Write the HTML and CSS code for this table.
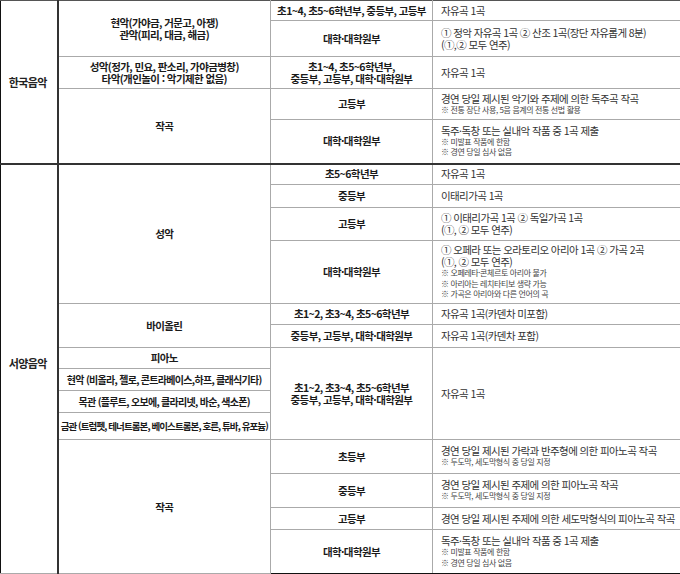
FILE: index.html
```html
<!DOCTYPE html>
<html lang="ko">
<head>
<meta charset="utf-8">
<link rel="stylesheet" href="styles.css">
</head>
<body>
<table class="grid">
  <colgroup>
    <col class="c1"><col class="c2"><col class="c3"><col class="c4">
  </colgroup>
  <tbody>
    <tr class="h20">
      <td class="cat" rowspan="5">한국음악</td>
      <td class="inst" rowspan="2">현악(가야금, 거문고, 아쟁)<br>관악(피리, 대금, 해금)</td>
      <td class="lvl">초1~4, 초5~6학년부, 중등부, 고등부</td>
      <td class="req">자유곡 1곡</td>
    </tr>
    <tr class="h36">
      <td class="lvl">대학·대학원부</td>
      <td class="req">① 정악 자유곡 1곡 ② 산조 1곡(장단 자유롭게 8분)<br>(①,② 모두 연주)</td>
    </tr>
    <tr class="h32">
      <td class="inst">성악(정가, 민요, 판소리, 가야금병창)<br>타악(개인놀이 : 악기제한 없음)</td>
      <td class="lvl">초1~4, 초5~6학년부,<br>중등부, 고등부, 대학·대학원부</td>
      <td class="req">자유곡 1곡</td>
    </tr>
    <tr class="h31">
      <td class="inst" rowspan="2">작곡</td>
      <td class="lvl">고등부</td>
      <td class="req">경연 당일 제시된 악기와 주제에 의한 독주곡 작곡<div class="note">※ 전통 장단 사용, 5음 음계의 전통 선법 활용</div></td>
    </tr>
    <tr class="h44">
      <td class="lvl">대학·대학원부</td>
      <td class="req">독주·독창 또는 실내악 작품 중 1곡 제출<div class="note">※ 미발표 작품에 한함</div><div class="note">※ 경연 당일 심사 없음</div></td>
    </tr>

    <tr class="h21 sect">
      <td class="cat west" rowspan="14">서양음악</td>
      <td class="inst" rowspan="4">성악</td>
      <td class="lvl">초5~6학년부</td>
      <td class="req">자유곡 1곡</td>
    </tr>
    <tr class="h23">
      <td class="lvl">중등부</td>
      <td class="req">이태리가곡 1곡</td>
    </tr>
    <tr class="h33">
      <td class="lvl">고등부</td>
      <td class="req">① 이태리가곡 1곡 ② 독일가곡 1곡<br>(①, ② 모두 연주)</td>
    </tr>
    <tr class="h63">
      <td class="lvl">대학·대학원부</td>
      <td class="req">① 오페라 또는 오라토리오 아리아 1곡 ② 가곡 2곡<br>(①, ② 모두 연주)<div class="note">※ 오페레타·콘체르토 아리아 불가</div><div class="note">※ 아리아는 레치타티보 생략 가능</div><div class="note">※ 가곡은 아리아와 다른 언어의 곡</div></td>
    </tr>
    <tr class="h21">
      <td class="inst" rowspan="2">바이올린</td>
      <td class="lvl">초1~2, 초3~4, 초5~6학년부</td>
      <td class="req">자유곡 1곡(카덴차 미포함)</td>
    </tr>
    <tr class="h23">
      <td class="lvl">중등부, 고등부, 대학·대학원부</td>
      <td class="req">자유곡 1곡(카덴차 포함)</td>
    </tr>
    <tr class="h21">
      <td class="inst">피아노</td>
      <td class="lvl" rowspan="4">초1~2, 초3~4, 초5~6학년부<br>중등부, 고등부, 대학·대학원부</td>
      <td class="req" rowspan="4">자유곡 1곡</td>
    </tr>
    <tr class="h22">
      <td class="inst sm">현악 (비올라, 첼로, 콘트라베이스,하프, 클래식기타)</td>
    </tr>
    <tr class="h22">
      <td class="inst sm">목관 (플루트, 오보에, 클라리넷, 바순, 색소폰)</td>
    </tr>
    <tr class="h27">
      <td class="inst xs">금관 (트럼펫, 테너트롬본, 베이스트롬본, 호른, 튜바, 유포늄)</td>
    </tr>
    <tr class="h34">
      <td class="inst" rowspan="4">작곡</td>
      <td class="lvl">초등부</td>
      <td class="req">경연 당일 제시된 가락과 반주형에 의한 피아노곡 작곡<div class="note">※ 두도막, 세도막형식 중 당일 지정</div></td>
    </tr>
    <tr class="h34">
      <td class="lvl">중등부</td>
      <td class="req">경연 당일 제시된 주제에 의한 피아노곡 작곡<div class="note">※ 두도막, 세도막형식 중 당일 지정</div></td>
    </tr>
    <tr class="h22">
      <td class="lvl">고등부</td>
      <td class="req">경연 당일 제시된 주제에 의한 세도막형식의 피아노곡 작곡</td>
    </tr>
    <tr class="h44">
      <td class="lvl">대학·대학원부</td>
      <td class="req">독주·독창 또는 실내악 작품 중 1곡 제출<div class="note">※ 미발표 작품에 한함</div><div class="note">※ 경연 당일 심사 없음</div></td>
    </tr>
  </tbody>
</table>
</body>
</html>
```

FILE: styles.css
```css
html, body {
  margin: 0;
  padding: 0;
  background: #fff;
}
body {
  font-family: "Noto Sans CJK KR", "Noto Sans", sans-serif;
  color: #222;
}
.grid {
  border-collapse: collapse;
  table-layout: fixed;
  width: 680px;
  height: 574px;
  border: 1px solid #222;
}
.c1 { width: 57px; }
.c2 { width: 213px; }
.c3 { width: 162px; }
.c4 { width: 248px; }

.grid td {
  border: 1px solid #aaa;
  padding: 0;
  vertical-align: middle;
  line-height: 12px;
  letter-spacing: -0.6px;
  white-space: nowrap;
}
.grid td.cat {
  border-right: 2px solid #333;
  border-left: 1px solid #111;
  font-weight: 700;
  font-size: 11px;
  text-align: center;
  padding-right: 2px;
}
.grid td.cat.west { padding-bottom: 12px; }
.grid tr:first-child td { border-top: 1px solid #555; }
.grid tr.sect td { border-top: 2px solid #333; }
.grid tr:last-child td { border-bottom: 1px solid #111; }
.grid td:last-child { border-right: 1px solid #333; }

.inst, .lvl {
  font-weight: 700;
  font-size: 10.5px;
  text-align: center;
  color: #1a1a1a;
}
.inst.sm { font-size: 10px; letter-spacing: -0.7px; }
.inst.xs { font-size: 9.5px; letter-spacing: -0.9px; }
.lvl { letter-spacing: -0.7px; }

.grid td.req {
  font-size: 10.5px;
  line-height: 12px;
  letter-spacing: -0.6px;
  padding-left: 8px;
  color: #333;
  text-align: left;
}
.note {
  font-size: 8px;
  line-height: 10.5px;
  letter-spacing: -0.4px;
  color: #444;
}

.h20 { height: 20px; }
.h21 { height: 21px; }
.h22 { height: 22px; }
.h23 { height: 23px; }
.h27 { height: 27px; }
.h31 { height: 31px; }
.h32 { height: 32px; }
.h33 { height: 33px; }
.h34 { height: 34px; }
.h36 { height: 36px; }
.h44 { height: 44px; }
.h63 { height: 63px; }
```
